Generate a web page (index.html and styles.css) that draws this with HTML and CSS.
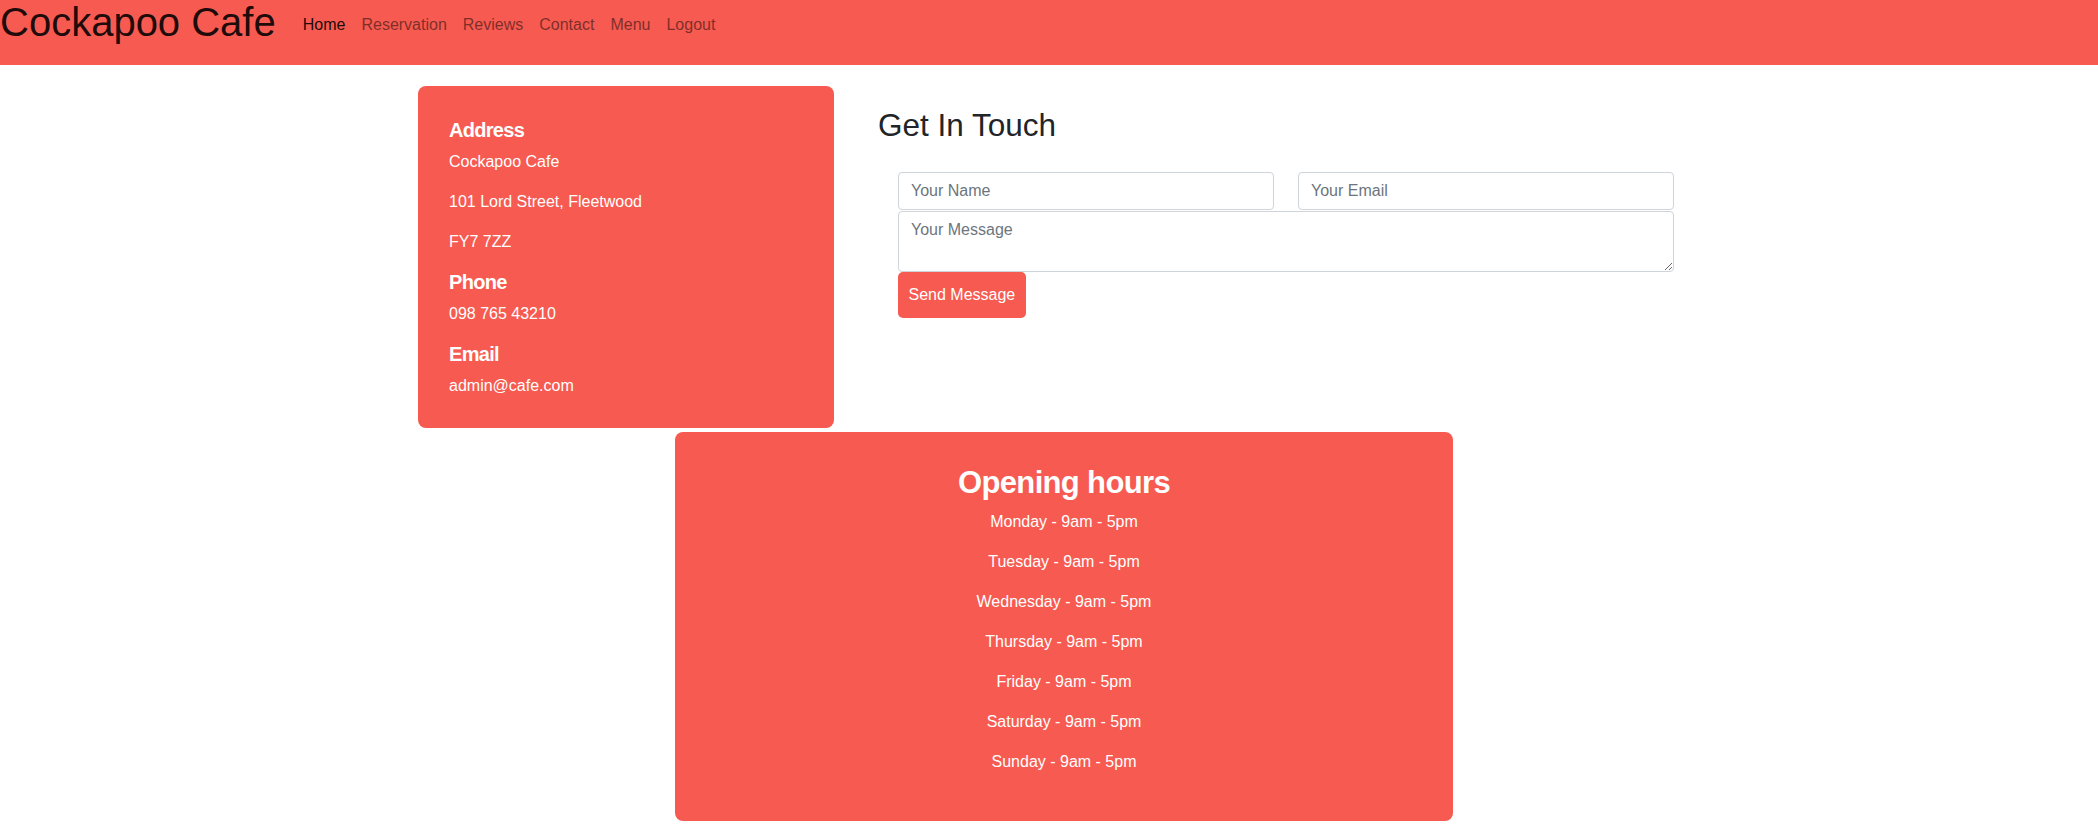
FILE: index.html
```html
<!DOCTYPE html>
<html lang="en">
<head>
<meta charset="utf-8">
<title>Cockapoo Cafe - Contact</title>
<link rel="stylesheet" href="styles.css">
</head>
<body>
<header class="navbar">
  <a class="brand" href="#">Cockapoo Cafe</a>
  <ul class="nav">
    <li><a class="nav-link active" href="#">Home</a></li>
    <li><a class="nav-link" href="#">Reservation</a></li>
    <li><a class="nav-link" href="#">Reviews</a></li>
    <li><a class="nav-link" href="#">Contact</a></li>
    <li><a class="nav-link" href="#">Menu</a></li>
    <li><a class="nav-link" href="#">Logout</a></li>
  </ul>
</header>
<main class="container">
  <div class="top-row">
    <section class="card info-card">
      <h5 class="card-heading">Address</h5>
      <p>Cockapoo Cafe</p>
      <p>101 Lord Street, Fleetwood</p>
      <p>FY7 7ZZ</p>
      <h5 class="card-heading">Phone</h5>
      <p>098 765 43210</p>
      <h5 class="card-heading">Email</h5>
      <p>admin@cafe.com</p>
    </section>
    <section class="contact">
      <h2 class="contact-title">Get In Touch</h2>
      <form class="contact-form">
        <div class="field-row">
          <input class="form-control" type="text" placeholder="Your Name">
          <input class="form-control" type="email" placeholder="Your Email">
        </div>
        <textarea class="form-control message" placeholder="Your Message"></textarea>
        <button class="btn-send" type="button">Send Message</button>
      </form>
    </section>
  </div>
  <section class="card hours-card">
    <h2 class="hours-title">Opening hours</h2>
    <p>Monday - 9am - 5pm</p>
    <p>Tuesday - 9am - 5pm</p>
    <p>Wednesday - 9am - 5pm</p>
    <p>Thursday - 9am - 5pm</p>
    <p>Friday - 9am - 5pm</p>
    <p>Saturday - 9am - 5pm</p>
    <p>Sunday - 9am - 5pm</p>
  </section>
</main>
</body>
</html>
```
FILE: styles.css
```css
* {
  box-sizing: border-box;
}

html, body {
  margin: 0;
  padding: 0;
}

body {
  font-family: "Liberation Sans", Arial, sans-serif;
  font-size: 16px;
  line-height: 1.5;
  color: #212529;
  background: #ffffff;
}

p {
  margin: 0 0 16px;
}

/* Navbar */
.navbar {
  display: flex;
  align-items: flex-start;
  height: 65px;
  background: #f65a50;
}

.brand {
  font-size: 40px;
  line-height: 44px;
  color: rgba(0, 0, 0, 0.9);
  text-decoration: none;
  margin-right: 19px;
  white-space: nowrap;
}

.nav {
  display: flex;
  list-style: none;
  margin: 5px 0 0;
  padding: 0;
}

.nav-link {
  display: block;
  padding: 8px;
  line-height: 24px;
  color: rgba(0, 0, 0, 0.5);
  text-decoration: none;
}

.nav-link.active {
  color: rgba(0, 0, 0, 0.9);
}

/* Layout */
.container {
  width: 1262px;
  margin: 0 auto;
}

.top-row {
  display: flex;
  align-items: flex-start;
  gap: 44px;
  margin-top: 21px;
}

.card {
  background: #f65a50;
  color: #ffffff;
  border-radius: 8px;
}

.info-card {
  width: 416px;
  flex: none;
  padding: 32px 31px 14px;
}

.card-heading {
  font-size: 20px;
  line-height: 24px;
  font-weight: 700;
  letter-spacing: -0.7px;
  margin: 0 0 8px;
}

/* Contact form */
.contact {
  width: 802px;
  flex: none;
}

.contact-title {
  font-size: 31.5px;
  line-height: 37px;
  font-weight: 400;
  margin: 21px 0 28px;
}

.contact-form {
  width: 776px;
  margin-left: 20px;
}

.field-row {
  display: grid;
  grid-template-columns: 1fr 1fr;
  column-gap: 24px;
}

.form-control {
  display: block;
  width: 100%;
  height: 38px;
  padding: 6px 12px;
  font-family: inherit;
  font-size: 16px;
  line-height: 24px;
  color: #495057;
  background: #ffffff;
  border: 1px solid #ced4da;
  border-radius: 4px;
  margin: 0;
}

.form-control::placeholder {
  color: #6c757d;
  opacity: 1;
}

.message {
  height: 61px;
  margin-top: 1px;
}

.btn-send {
  display: block;
  padding: 11px 10.5px;
  font-family: inherit;
  font-size: 16px;
  line-height: 24px;
  color: #ffffff;
  background: #f65a50;
  border: none;
  border-radius: 5px;
}

/* Opening hours */
.hours-card {
  width: 778px;
  margin: 4px 0 0 257px;
  padding: 32px 32px 31px;
  text-align: center;
}

.hours-title {
  font-size: 31px;
  line-height: 1.2;
  font-weight: 700;
  letter-spacing: -0.65px;
  margin: 0 0 9px;
}
```
